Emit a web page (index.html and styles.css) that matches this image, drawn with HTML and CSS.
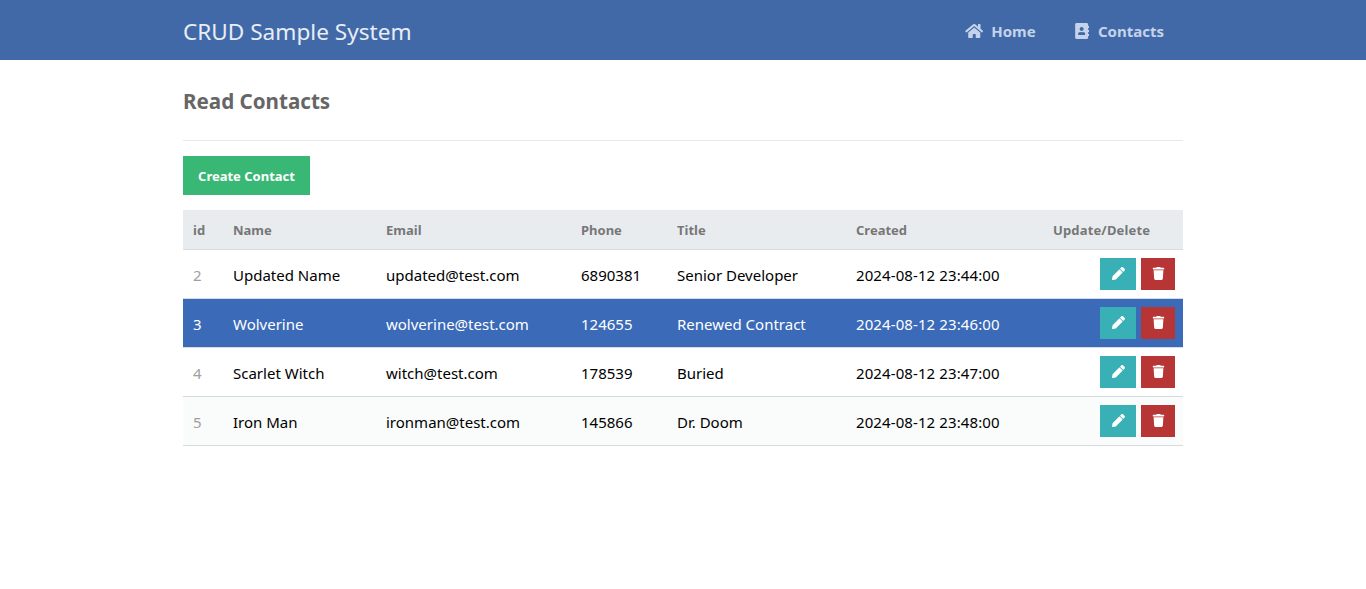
FILE: index.html
```html
<!DOCTYPE html>
<html lang="en">
<head>
<meta charset="utf-8">
<title>CRUD Sample System</title>
<link rel="stylesheet" href="styles.css">
</head>
<body>
<header class="navbar">
  <div class="container nav-inner">
    <a class="brand" href="#">CRUD Sample System</a>
    <nav class="nav-links">
      <a class="nav-link" href="#"><svg class="icon icon-home" viewBox="0 0 576 512"><path d="M280.37 148.26L96 300.11V464a16 16 0 0 0 16 16l112.06-.29a16 16 0 0 0 15.92-16V368a16 16 0 0 1 16-16h64a16 16 0 0 1 16 16v95.64a16 16 0 0 0 16 16.05L464 480a16 16 0 0 0 16-16V300L295.67 148.26a12.19 12.19 0 0 0-15.3 0zM571.6 251.47L488 182.56V44.05a12 12 0 0 0-12-12h-56a12 12 0 0 0-12 12v72.61L318.47 43a48 48 0 0 0-61 0L4.34 251.47a12 12 0 0 0-1.6 16.9l25.5 31A12 12 0 0 0 45.15 301l235.22-193.74a12.19 12.19 0 0 1 15.3 0L530.9 301a12 12 0 0 0 16.9-1.6l25.5-31a12 12 0 0 0-1.7-16.93z"/></svg>Home</a>
      <a class="nav-link" href="#"><svg class="icon icon-book" viewBox="0 0 448 512"><path d="M436 160c6.6 0 12-5.4 12-12v-40c0-6.6-5.4-12-12-12h-20V48c0-26.5-21.5-48-48-48H48C21.5 0 0 21.5 0 48v416c0 26.5 21.5 48 48 48h320c26.5 0 48-21.5 48-48v-48h20c6.6 0 12-5.4 12-12v-40c0-6.6-5.4-12-12-12h-20v-64h20c6.6 0 12-5.4 12-12v-40c0-6.6-5.4-12-12-12h-20v-64h20zm-228-32c35.3 0 64 28.7 64 64s-28.7 64-64 64-64-28.7-64-64 28.7-64 64-64zm112 236.8c0 10.6-10 19.2-22.4 19.2H118.4C106 384 96 375.4 96 364.8v-19.2c0-31.8 30.1-57.6 67.2-57.6h5c12.3 5.1 25.7 8 39.8 8s27.6-2.9 39.8-8h5c37.1 0 67.2 25.8 67.2 57.6v19.2z"/></svg>Contacts</a>
    </nav>
  </div>
</header>
<main class="container">
  <h1 class="page-title">Read Contacts</h1>
  <a class="btn-create" href="#">Create Contact</a>
  <table class="contacts">
    <colgroup>
      <col class="c-id"><col class="c-name"><col class="c-email"><col class="c-phone"><col class="c-title"><col class="c-created"><col class="c-actions">
    </colgroup>
    <thead>
      <tr><th>id</th><th>Name</th><th>Email</th><th>Phone</th><th>Title</th><th>Created</th><th class="th-actions">Update/Delete</th></tr>
    </thead>
    <tbody>
      <tr>
        <td class="td-id">2</td><td>Updated Name</td><td>updated@test.com</td><td>6890381</td><td>Senior Developer</td><td class="td-date">2024-08-12 23:44:00</td>
        <td class="td-actions"><a class="act act-edit" href="#"><svg class="icon-act" viewBox="0 0 512 512"><path d="M497.9 142.1l-46.1 46.1c-4.7 4.7-12.3 4.7-17 0l-111-111c-4.7-4.7-4.7-12.3 0-17l46.1-46.1c18.7-18.7 49.1-18.7 67.9 0l60.1 60.1c18.8 18.7 18.8 49.1 0 67.9zM284.2 99.8L21.6 362.4.4 483.9c-2.9 16.4 11.4 30.6 27.8 27.8l121.5-21.3 262.6-262.6c4.7-4.7 4.7-12.3 0-17l-111-111c-4.8-4.7-12.4-4.7-17.1 0z"/></svg></a><a class="act act-del" href="#"><svg class="icon-act" viewBox="0 0 448 512"><path d="M432 32H312l-9.4-18.7A24 24 0 0 0 281.1 0H166.8a23.72 23.72 0 0 0-21.4 13.3L136 32H16A16 16 0 0 0 0 48v32a16 16 0 0 0 16 16h416a16 16 0 0 0 16-16V48a16 16 0 0 0-16-16zM53.2 467a48 48 0 0 0 47.9 45h245.8a48 48 0 0 0 47.9-45L416 128H32z"/></svg></a></td>
      </tr>
      <tr class="row-active">
        <td class="td-id">3</td><td>Wolverine</td><td>wolverine@test.com</td><td>124655</td><td>Renewed Contract</td><td class="td-date">2024-08-12 23:46:00</td>
        <td class="td-actions"><a class="act act-edit" href="#"><svg class="icon-act" viewBox="0 0 512 512"><path d="M497.9 142.1l-46.1 46.1c-4.7 4.7-12.3 4.7-17 0l-111-111c-4.7-4.7-4.7-12.3 0-17l46.1-46.1c18.7-18.7 49.1-18.7 67.9 0l60.1 60.1c18.8 18.7 18.8 49.1 0 67.9zM284.2 99.8L21.6 362.4.4 483.9c-2.9 16.4 11.4 30.6 27.8 27.8l121.5-21.3 262.6-262.6c4.7-4.7 4.7-12.3 0-17l-111-111c-4.8-4.7-12.4-4.7-17.1 0z"/></svg></a><a class="act act-del" href="#"><svg class="icon-act" viewBox="0 0 448 512"><path d="M432 32H312l-9.4-18.7A24 24 0 0 0 281.1 0H166.8a23.72 23.72 0 0 0-21.4 13.3L136 32H16A16 16 0 0 0 0 48v32a16 16 0 0 0 16 16h416a16 16 0 0 0 16-16V48a16 16 0 0 0-16-16zM53.2 467a48 48 0 0 0 47.9 45h245.8a48 48 0 0 0 47.9-45L416 128H32z"/></svg></a></td>
      </tr>
      <tr>
        <td class="td-id">4</td><td>Scarlet Witch</td><td>witch@test.com</td><td>178539</td><td>Buried</td><td class="td-date">2024-08-12 23:47:00</td>
        <td class="td-actions"><a class="act act-edit" href="#"><svg class="icon-act" viewBox="0 0 512 512"><path d="M497.9 142.1l-46.1 46.1c-4.7 4.7-12.3 4.7-17 0l-111-111c-4.7-4.7-4.7-12.3 0-17l46.1-46.1c18.7-18.7 49.1-18.7 67.9 0l60.1 60.1c18.8 18.7 18.8 49.1 0 67.9zM284.2 99.8L21.6 362.4.4 483.9c-2.9 16.4 11.4 30.6 27.8 27.8l121.5-21.3 262.6-262.6c4.7-4.7 4.7-12.3 0-17l-111-111c-4.8-4.7-12.4-4.7-17.1 0z"/></svg></a><a class="act act-del" href="#"><svg class="icon-act" viewBox="0 0 448 512"><path d="M432 32H312l-9.4-18.7A24 24 0 0 0 281.1 0H166.8a23.72 23.72 0 0 0-21.4 13.3L136 32H16A16 16 0 0 0 0 48v32a16 16 0 0 0 16 16h416a16 16 0 0 0 16-16V48a16 16 0 0 0-16-16zM53.2 467a48 48 0 0 0 47.9 45h245.8a48 48 0 0 0 47.9-45L416 128H32z"/></svg></a></td>
      </tr>
      <tr class="row-tint">
        <td class="td-id">5</td><td>Iron Man</td><td>ironman@test.com</td><td>145866</td><td>Dr. Doom</td><td class="td-date">2024-08-12 23:48:00</td>
        <td class="td-actions"><a class="act act-edit" href="#"><svg class="icon-act" viewBox="0 0 512 512"><path d="M497.9 142.1l-46.1 46.1c-4.7 4.7-12.3 4.7-17 0l-111-111c-4.7-4.7-4.7-12.3 0-17l46.1-46.1c18.7-18.7 49.1-18.7 67.9 0l60.1 60.1c18.8 18.7 18.8 49.1 0 67.9zM284.2 99.8L21.6 362.4.4 483.9c-2.9 16.4 11.4 30.6 27.8 27.8l121.5-21.3 262.6-262.6c4.7-4.7 4.7-12.3 0-17l-111-111c-4.8-4.7-12.4-4.7-17.1 0z"/></svg></a><a class="act act-del" href="#"><svg class="icon-act" viewBox="0 0 448 512"><path d="M432 32H312l-9.4-18.7A24 24 0 0 0 281.1 0H166.8a23.72 23.72 0 0 0-21.4 13.3L136 32H16A16 16 0 0 0 0 48v32a16 16 0 0 0 16 16h416a16 16 0 0 0 16-16V48a16 16 0 0 0-16-16zM53.2 467a48 48 0 0 0 47.9 45h245.8a48 48 0 0 0 47.9-45L416 128H32z"/></svg></a></td>
      </tr>
    </tbody>
  </table>
</main>
</body>
</html>
```
FILE: styles.css
```css
* { box-sizing: border-box; }
html, body { margin: 0; padding: 0; background: #fff; }
body { font-family: "Noto Sans", "Open Sans", sans-serif; font-size: 15px; color: #000; }
a { text-decoration: none; }
.container { width: 1000px; margin: 0 auto; }
.navbar { height: 60px; background: #4169a8; }
.nav-inner { height: 60px; padding-top: 1px; display: flex; align-items: center; justify-content: space-between; }
.brand { padding-top: 1px; color: #e8edf6; font-size: 22.6px; }
.nav-links { display: flex; gap: 39px; padding-right: 19px; }
.nav-link { display: flex; align-items: center; gap: 8px; color: #c5d3ea; font-weight: 700; font-size: 15px; }
.nav-link + .nav-link { gap: 9px; }
.icon { fill: #c5d3ea; height: 16px; display: block; }
.icon-home { width: 18.5px; }
.icon-book { width: 14.3px; }
.page-title { margin: 0; height: 81px; padding-top: 27px; border-bottom: 1px solid #e8e8e8; color: #666; font-size: 20.6px; font-weight: 700; line-height: 28px; }
.btn-create { display: flex; align-items: center; justify-content: center; width: 127px; height: 39px; margin-top: 15px; background: #38b775; color: #fff; font-weight: 700; font-size: 13px; }
.contacts { width: 1000px; margin-top: 15px; border-collapse: separate; border-spacing: 0; table-layout: fixed; }
.c-id { width: 40px; } .c-name { width: 153px; } .c-email { width: 195px; } .c-phone { width: 96px; }
.c-title { width: 179px; } .c-created { width: 197px; } .c-actions { width: 140px; }
th { height: 40px; padding: 1px 10px 0; background: #e9ecef; color: #777; font-size: 13px; font-weight: 700; text-align: left; border-bottom: 1px solid #d8dbdf; }
td { height: 49px; padding: 1px 10px 0; border-bottom: 1px solid #d5dbe0; }
.th-actions { white-space: nowrap; letter-spacing: 0.15px; }
.td-id { color: #a0a0a0; }
.td-date { letter-spacing: 0.1px; }
td.td-actions { padding: 0 8px 0 0; text-align: right; }
.act { display: inline-flex; align-items: center; justify-content: center; height: 32px; vertical-align: middle; }
.act-edit { width: 36px; background: #38b0b5; }
.act-del { width: 34px; margin-left: 5px; background: #b83535; }
.icon-act { fill: #fff; height: 13px; width: 13px; margin-bottom: 1px; display: block; }
.row-active td { background: #3a6ab8; color: #fff; }
.row-tint td { background: #fafcfb; }
```
